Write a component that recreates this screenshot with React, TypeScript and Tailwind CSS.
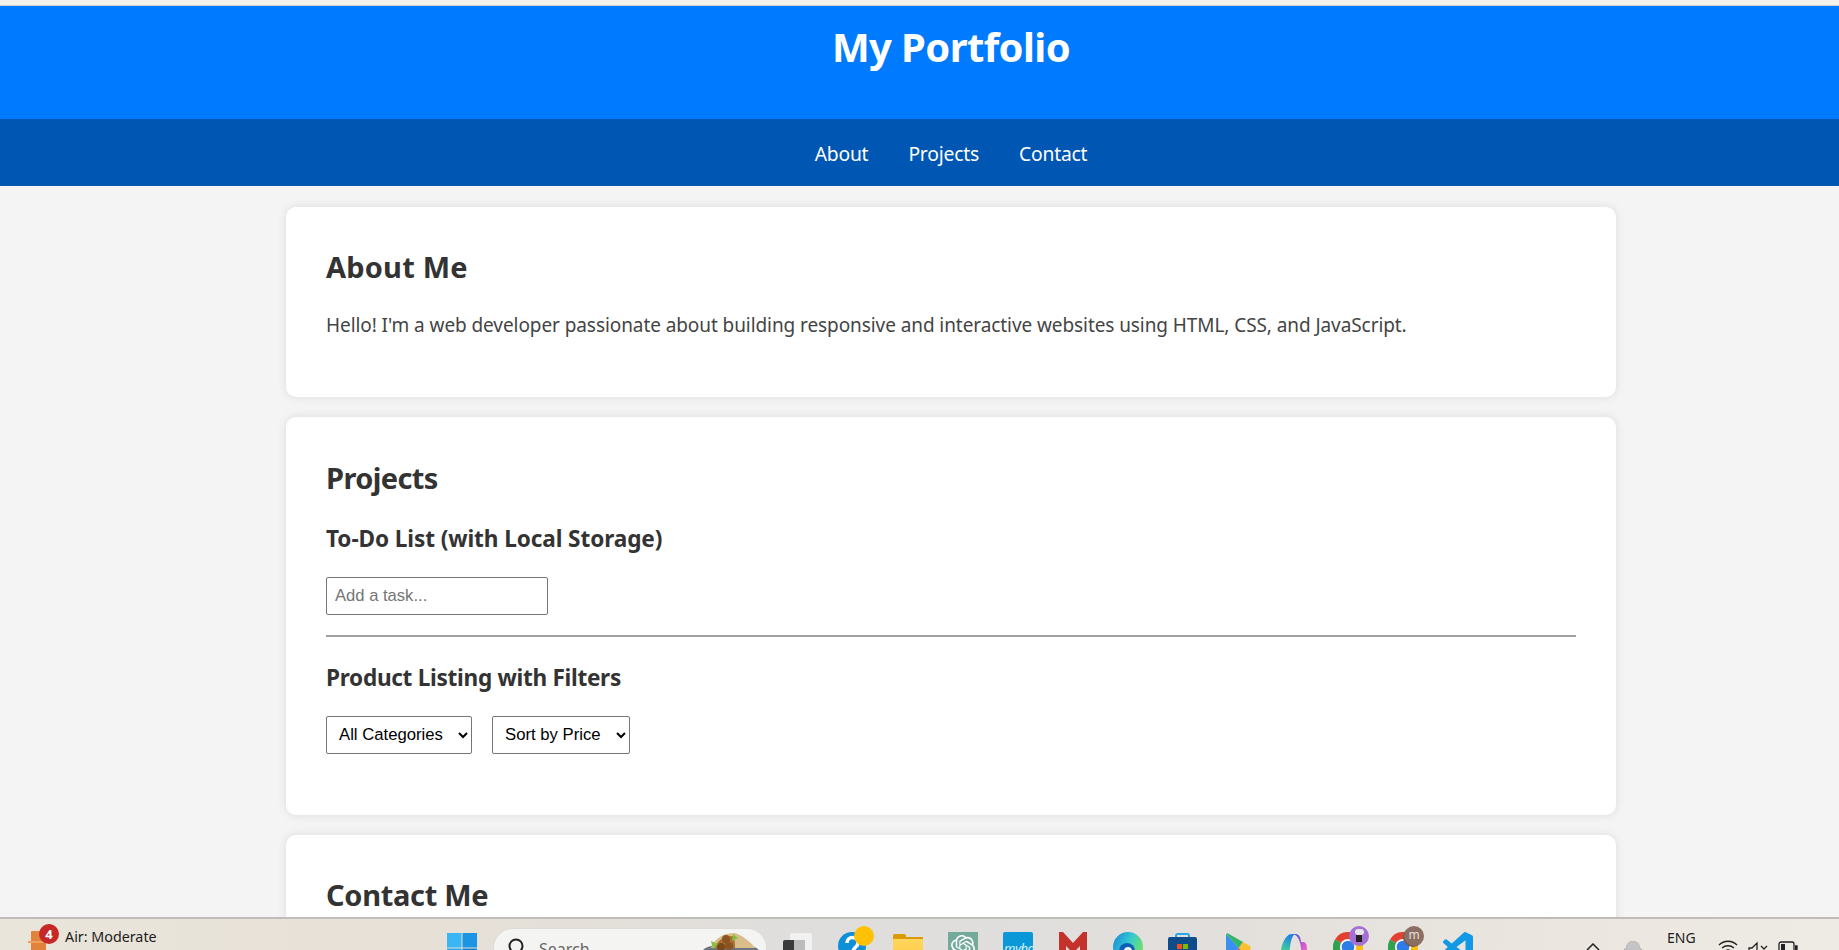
import React from "react";
import { SiOpenai } from "react-icons/si";

const Slot = ({ children }: { children: React.ReactNode }) => (
  <div className="relative w-[30px] h-[30px] shrink-0">{children}</div>
);

const Chrome = () => (
  <svg viewBox="0 0 30 30" className="w-[30px] h-[30px]">
    <path d="M15 15L2 7.500A15 15 0 0 1 28 7.500Z" fill="#e2412f" />
    <path d="M15 15L28 7.500A15 15 0 0 1 15 30Z" fill="#f9bd15" />
    <path d="M15 15L15 30A15 15 0 0 1 2 7.500Z" fill="#2fa24f" />
    <circle cx="15" cy="15" r="8" fill="#fff" />
    <circle cx="15" cy="15" r="6.300" fill="#2f7be8" />
  </svg>
);

const TaskIcons = () => (
  <div className="flex gap-[25px] ml-[16px] pt-[13px] shrink-0">
    <Slot>
      <div className="absolute left-[7px] top-[1px] w-[22px] h-[29px] bg-[#f1f1f1] rounded-[2px]" />
      <div className="absolute left-[0px] top-[8px] w-[11px] h-[22px] bg-[#3a3a3a] rounded-tl-[2px]" />
      <div className="absolute left-[11px] top-[8px] w-[11px] h-[22px] bg-[#bcbcbc]" />
    </Slot>
    <Slot>
      <svg viewBox="0 0 30 30" className="w-[30px] h-[30px]">
        <circle cx="14" cy="14" r="14" fill="#0f8fd6" />
        <path d="M9 11a5.500 5.500 0 0 1 11 0c0 4-5 4-5 9" fill="none" stroke="#fff" strokeWidth="3.500" />
      </svg>
      <div className="absolute left-[16px] top-[-6px] w-[20px] h-[20px] rounded-full bg-[#ffc107]" />
    </Slot>
    <Slot>
      <div className="absolute left-0 top-[2px] w-[13px] h-[8px] rounded-t-[2px] bg-[#d99a06]" />
      <div className="absolute left-0 top-[5px] w-[30px] h-[2px] bg-[#d99a06]" />
      <div className="absolute left-0 top-[7px] w-[30px] h-[23px] bg-[linear-gradient(180deg,#ffd75e,#fcc73f)]" />
    </Slot>
    <Slot>
      <div className="w-[30px] h-[30px] bg-[#74aa9c] flex justify-center pt-[3px]">
        <SiOpenai className="w-[24px] h-[24px] text-white" />
      </div>
    </Slot>
    <Slot>
      <div className="w-[30px] h-[30px] bg-[#0a98d8] rounded-t-[2px] text-[#d9f2fc] text-[13px] italic leading-[18px] pt-[7px] pl-[1px] tracking-[-0.5px] overflow-hidden font-['Noto_Sans',sans-serif]">
        myhq
      </div>
    </Slot>
    <Slot>
      <svg viewBox="0 0 28 30" className="w-[28px] h-[30px] ml-[1px]">
        <path d="M0 0h4l10 11L24 0h4v30h-7V14l-7 7-7-7v16H0z" fill="#c5322c" />
      </svg>
    </Slot>
    <Slot>
      <svg viewBox="0 0 30 30" className="w-[30px] h-[30px]">
        <defs>
          <linearGradient id="edgeG" x1="0" y1="0" x2="1" y2="0.500">
            <stop offset="0" stopColor="#1583d6" />
            <stop offset="0.550" stopColor="#35c8d2" />
            <stop offset="1" stopColor="#6fe06a" />
          </linearGradient>
        </defs>
        <circle cx="15" cy="15" r="15" fill="url(#edgeG)" />
        <circle cx="14" cy="19" r="8" fill="#0c5fb8" />
        <circle cx="15" cy="19" r="4" fill="#f2f2f2" />
      </svg>
    </Slot>
    <Slot>
      <div className="absolute left-[7px] top-[1px] w-[15px] h-[7px] border-2 border-b-0 border-[#2aa6e8] rounded-t-[3px]" />
      <div className="absolute left-0 top-[5px] w-[29px] h-[25px] bg-[#0f4c8a] rounded-t-[2px] flex gap-[1px] pt-[7px] pl-[9px]">
        <div className="w-[5px] h-[5px] bg-[#f25022]" />
        <div className="w-[5px] h-[5px] bg-[#7fba00]" />
      </div>
    </Slot>
    <Slot>
      <svg viewBox="0 0 26 30" className="w-[26px] h-[30px] ml-[2px] mt-[1px]">
        <path d="M1 1l13 14L1 29z" fill="#3a8ff0" />
        <path d="M1 1c1-1 2-1 3 0l14 8-4 6z" fill="#35b56a" />
        <path d="M18 9l7 4c1 1 1 3 0 4l-7 4-4-6z" fill="#fbc02d" />
        <path d="M14 15l4 6L4 29c-1 1-2 1-3 0z" fill="#e8453c" />
      </svg>
    </Slot>
    <Slot>
      <svg viewBox="0 0 28 30" className="w-[28px] h-[30px] ml-[1px] mt-[2px]">
        <defs>
          <linearGradient id="copL" x1="0.500" y1="0" x2="0.200" y2="1">
            <stop offset="0" stopColor="#1d7fe8" />
            <stop offset="0.500" stopColor="#3cc8a0" />
            <stop offset="1" stopColor="#e9d94a" />
          </linearGradient>
          <linearGradient id="copR" x1="0" y1="0" x2="1" y2="1">
            <stop offset="0" stopColor="#1f5fd8" />
            <stop offset="0.600" stopColor="#d75ad0" />
            <stop offset="1" stopColor="#f08ab0" />
          </linearGradient>
        </defs>
        <path d="M0 30C1 12 6 0 13 0h4c-5 0-6 12-8 30z" fill="url(#copL)" />
        <path d="M13 0h4c3 0 5 4 5 8h2c3 0 4 3 4 6v8c0 4-2 6-6 6h-4c4-2 5-6 4-14C21 6 18 0 13 0z" fill="url(#copR)" />
      </svg>
    </Slot>
    <Slot>
      <Chrome />
      <div className="absolute left-[16px] top-[-6px] w-[20px] h-[20px] rounded-full bg-[#a66fd6] flex flex-col items-center pt-[3px]">
        <div className="w-[9px] h-[6px] rounded-full bg-[#e5e5e5]" />
        <div className="w-[6px] h-[7px] bg-[#222]" />
      </div>
    </Slot>
    <Slot>
      <Chrome />
      <div className="absolute left-[15px] top-[-5px] w-[20px] h-[20px] rounded-full bg-[#6e564c]" />
      <div className="absolute left-[16px] top-[-6px] w-[20px] h-[20px] rounded-full bg-[#8c6f63] text-[#e8e0dc] text-[12px] leading-[18px] text-center font-['Noto_Sans',sans-serif]">
        m
      </div>
    </Slot>
    <Slot>
      <svg viewBox="0 0 24 24" className="w-[30px] h-[30px]" fill="#1299e6">
        <path d="M23.15 2.587L18.21.21a1.494 1.494 0 0 0-1.705.29l-9.46 8.63-4.12-3.128a.999.999 0 0 0-1.276.057L.327 7.261A1 1 0 0 0 .326 8.74L3.899 12 .326 15.26a1 1 0 0 0 .001 1.479L1.65 17.94a.999.999 0 0 0 1.276.057l4.12-3.128 9.46 8.63a1.492 1.492 0 0 0 1.704.29l4.942-2.377A1.5 1.5 0 0 0 24 20.06V3.939a1.5 1.5 0 0 0-.85-1.352zm-5.146 14.861L10.826 12l7.178-5.448v10.896z" />
      </svg>
    </Slot>
  </div>
);

const Taskbar = () => (
  <div className="h-[33px] shrink-0 border-t-2 border-[#bfbdb9] bg-[linear-gradient(90deg,#eae5da_0%,#e6e0d7_25%,#dfdedd_45%,#e2dfdc_65%,#ebe6df_85%,#eeebe5_100%)] flex items-start overflow-hidden font-['Noto_Sans',sans-serif] text-[#1d1d1d]">
    <div className="relative w-[28px] h-[30px] ml-[28px] mt-[12px] shrink-0">
      <div className="absolute left-[3px] top-[0px] w-[15px] h-[20px] bg-[#e2833c] rounded-[1px]" />
      <div className="absolute left-[0px] top-[10px] w-[25px] h-[2px] bg-[#f0a060]" />
      <div className="absolute left-[11px] top-[-7px] w-[20px] h-[20px] rounded-full bg-[#c62828] text-white text-[13px] font-bold leading-[20px] text-center">
        4
      </div>
    </div>
    <div className="ml-[9px] mt-[9px] text-[14.3px] leading-[18px] w-[110px] shrink-0">Air: Moderate</div>
    <svg viewBox="0 0 30 30" className="w-[30px] h-[30px] ml-[272px] mt-[14px] shrink-0">
      <rect x="0" y="0" width="14.500" height="14.500" fill="#3ab6f4" />
      <rect x="15.500" y="0" width="14.500" height="14.500" fill="#1a94e3" />
      <rect x="0" y="15.500" width="14.500" height="14.500" fill="#2aa5ea" />
      <rect x="15.500" y="15.500" width="14.500" height="14.500" fill="#1280d0" />
    </svg>
    <div className="relative w-[274px] h-[40px] ml-[16px] mt-[9px] bg-[#f4f4f2] border border-[#dedcd9] rounded-[20px] shrink-0 flex items-start pl-[14px] pt-[9px]">
      <svg viewBox="0 0 16 20" className="w-[16px] h-[20px] shrink-0" fill="none" stroke="#222" strokeWidth="2">
        <circle cx="8" cy="8" r="6.500" />
        <path d="M12 13l3 4" />
      </svg>
      <span className="ml-[15px] text-[16px] leading-[22px] text-[#666]">Search</span>
      <svg viewBox="0 0 56 20" className="absolute left-[209px] top-[4px] w-[56px] h-[20px]">
        <ellipse cx="28" cy="18" rx="28" ry="7" fill="#6d7480" />
        <path d="M8 15C12 4 22 0 32 0c8 3 16 9 20 15z" fill="#d9bd8a" />
        <path d="M12 15C15 6 22 3 30 3c2 4 2 8 2 12z" fill="#a86f2f" />
        <circle cx="18" cy="14" r="4" fill="#7a4a1c" />
        <circle cx="26" cy="13" r="4" fill="#8a5522" />
        <circle cx="23" cy="6" r="4" fill="#8a5522" />
        <path d="M8 8l7 3-5 5zM30 1l5 4-6 3z" fill="#84bf3f" />
      </svg>
    </div>
    <TaskIcons />
    <svg viewBox="0 0 14 8" className="ml-[113px] mt-[24px] w-[14px] h-[8px] shrink-0" fill="none" stroke="#222" strokeWidth="1.500">
      <path d="M1 7l6-6 6 6" />
    </svg>
    <svg viewBox="0 0 20 20" className="ml-[23px] mt-[21px] w-[20px] h-[20px] shrink-0">
      <path d="M3 8a7 7 0 0 1 14 0c2 1 3 3 3 5v7H0v-7c0-2 1-4 3-5z" fill="#8f8f8f" />
      <path d="M3 8a7 7 0 0 1 14 0l3 4H0z" fill="#c4c4c4" />
    </svg>
    <div className="ml-[24px] mt-[10px] w-[28px] text-[14px] leading-[18px] shrink-0">ENG</div>
    <svg viewBox="0 0 20 20" className="ml-[23px] mt-[20px] w-[20px] h-[20px] shrink-0" fill="none" stroke="#222" strokeWidth="1.300">
      <path d="M1 6c5-5 13-5 18 0M4 9c3.500-3 8.500-3 12 0M7 12c2-1.500 4-1.500 6 0" />
    </svg>
    <svg viewBox="0 0 20 20" className="ml-[10px] mt-[22px] w-[20px] h-[20px] shrink-0" fill="none" stroke="#222" strokeWidth="1.300">
      <path d="M1 7h3l5-5v16l-5-5H1zM13 5l6 6M19 5l-6 6" />
    </svg>
    <svg viewBox="0 0 20 20" className="ml-[10px] mt-[22px] w-[20px] h-[20px] shrink-0" fill="none" stroke="#222" strokeWidth="1.300">
      <rect x="1" y="1" width="15" height="18" rx="2" />
      <rect x="3" y="3" width="4" height="14" fill="#222" stroke="none" />
      <path d="M17 5h2v4h-2" fill="#222" />
    </svg>
  </div>
);

export default function App() {
  return (
    <div className="h-screen overflow-hidden flex flex-col bg-[#f4f4f4] font-['Noto_Sans',sans-serif]">
      <div className="flex-1 min-h-0 overflow-hidden">
        <div className="w-[1902px]">
          <div className="h-[6px] bg-[#f4f4ec] border-b border-[#d0d0d0]" />
          <header className="h-[113px] bg-[#007bff] text-white text-center pt-[17px]">
            <h1 className="text-[40px] leading-[48px] font-bold tracking-[-0.6px]">My Portfolio</h1>
          </header>
          <nav className="h-[67px] bg-[#0056b3] flex justify-center items-center gap-[40px] text-white text-[19.3px] tracking-[-0.2px] pt-[3px]">
            <a>About</a>
            <a>Projects</a>
            <a>Contact</a>
          </nav>
          <main className="flex flex-col items-center gap-[20px] pt-[21px]">
            <section className="w-[1330px] h-[190px] bg-white rounded-[10px] shadow-[0_0_10px_rgba(0,0,0,0.1)] px-[40px] pt-[41px]">
              <h2 className="text-[29px] leading-[38px] font-bold text-[#333] tracking-[0.2px]">About Me</h2>
              <p className="mt-[26px] text-[19px] leading-[26px] text-[#444] tracking-[-0.08px]">
                Hello! I'm a web developer passionate about building responsive and interactive websites using HTML, CSS, and JavaScript.
              </p>
            </section>
            <section className="w-[1330px] h-[398px] bg-white rounded-[10px] shadow-[0_0_10px_rgba(0,0,0,0.1)] px-[40px] pt-[42px]">
              <h2 className="text-[29px] leading-[38px] font-bold text-[#333] tracking-[-0.6px]">Projects</h2>
              <h3 className="mt-[27px] text-[22.6px] leading-[30px] font-bold text-[#333] tracking-[-0.1px]">To-Do List (with Local Storage)</h3>
              <input
                placeholder="Add a task..."
                className="block mt-[23px] w-[222px] h-[38px] border border-[#767676] rounded-[2px] px-[8px] text-[16.6px] font-['Liberation_Sans',sans-serif] placeholder:text-[#757575]"
              />
              <hr className="mt-[20px] border-t-0 h-[1.500px] bg-[#a0a0a0]" />
              <h3 className="mt-[26px] text-[22.6px] leading-[30px] font-bold text-[#333] tracking-[-0.3px]">Product Listing with Filters</h3>
              <div className="flex gap-[20px] mt-[23px] font-['Liberation_Sans',sans-serif] text-[16.7px] text-black">
                <select className="w-[146px] h-[38px] border border-[#767676] rounded-[2px] pl-[8px] bg-white">
                  <option>All Categories</option>
                </select>
                <select className="w-[138px] h-[38px] border border-[#767676] rounded-[2px] pl-[8px] bg-white">
                  <option>Sort by Price</option>
                </select>
              </div>
            </section>
            <section className="w-[1330px] h-[200px] bg-white rounded-[10px] shadow-[0_0_10px_rgba(0,0,0,0.1)] px-[40px] pt-[41px]">
              <h2 className="text-[29px] leading-[38px] font-bold text-[#333] tracking-[-0.3px]">Contact Me</h2>
            </section>
          </main>
        </div>
      </div>
      <Taskbar />
    </div>
  );
}
